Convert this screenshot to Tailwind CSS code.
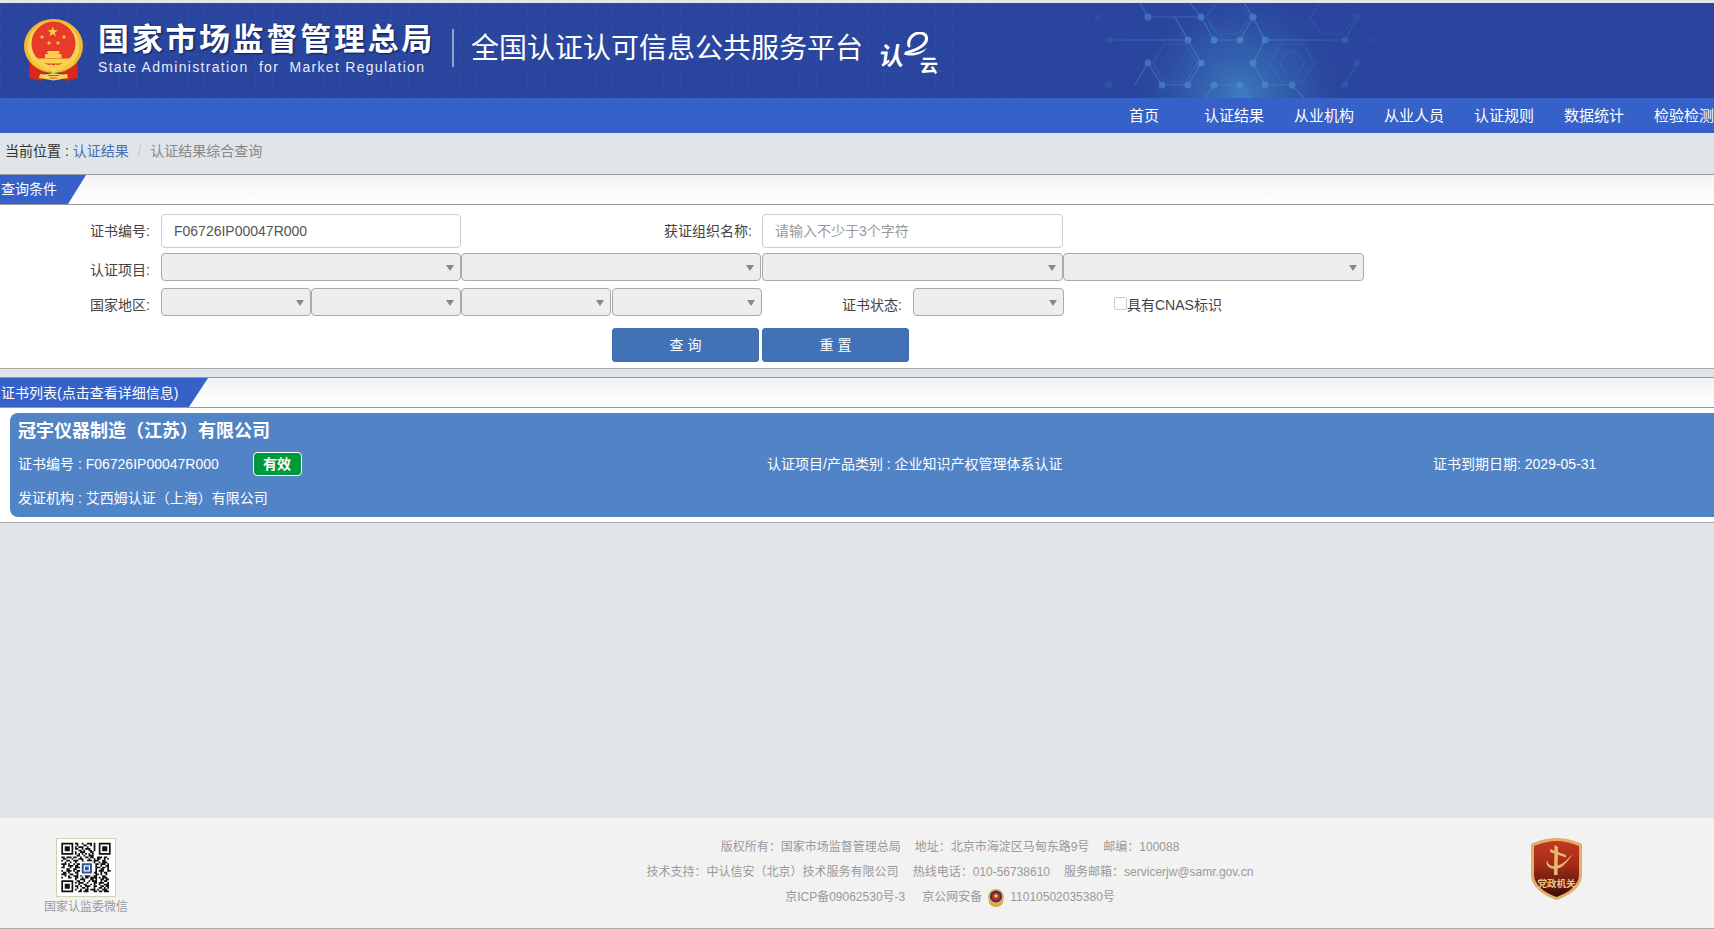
<!DOCTYPE html>
<html lang="zh-CN">
<head>
<meta charset="utf-8">
<title>全国认证认可信息公共服务平台</title>
<script src="https://cdn.jsdelivr.net/npm/@tailwindcss/browser@4"></script>
</head>
<body class="font-['Liberation_Sans','Noto_Sans_CJK_SC',sans-serif] text-[14px] text-[#555] bg-[#e0e5e9]">
<div class="w-[1714px] h-[929px] overflow-hidden flex flex-col">

  <!-- header -->
  <div class="h-[3px] bg-[#e4e6ea]"></div>
  <header class="relative h-[95px] bg-[#2a459d] overflow-hidden flex items-start">
    <svg class="absolute inset-0" width="1714" height="95" viewBox="0 0 1714 95">
      <defs>
        <pattern id="grid" width="17" height="17" patternUnits="userSpaceOnUse">
          <path d="M17 0H0V17" fill="none" stroke="#3a55ad" stroke-width="1"/>
        </pattern>
        <linearGradient id="gridFade" x1="0" x2="1" y1="0" y2="0">
          <stop offset="0" stop-color="#fff" stop-opacity=".55"/>
          <stop offset=".8" stop-color="#fff" stop-opacity=".55"/>
          <stop offset="1" stop-color="#fff" stop-opacity="0"/>
        </linearGradient>
        <mask id="gridMask"><rect width="1240" height="95" fill="url(#gridFade)"/></mask>
        <radialGradient id="glow" cx="1240" cy="92" r="110" gradientUnits="userSpaceOnUse">
          <stop offset="0" stop-color="#3f86c4" stop-opacity=".85"/>
          <stop offset=".6" stop-color="#3568b4" stop-opacity=".4"/>
          <stop offset="1" stop-color="#2a459d" stop-opacity="0"/>
        </radialGradient>
        <radialGradient id="netFade" cx="1225" cy="60" r="165" gradientUnits="userSpaceOnUse">
          <stop offset="0" stop-color="#fff"/>
          <stop offset=".55" stop-color="#fff" stop-opacity=".7"/>
          <stop offset="1" stop-color="#fff" stop-opacity=".08"/>
        </radialGradient>
        <mask id="netMask"><rect width="1714" height="95" fill="url(#netFade)"/></mask>
      </defs>
      <rect width="1240" height="95" fill="url(#grid)" mask="url(#gridMask)"/>
      <rect x="1060" width="360" height="95" fill="url(#glow)"/>
      <g mask="url(#netMask)">
        <g transform="translate(0 -3)" fill="none" stroke="#4b86c4" stroke-width="1.2" opacity=".75">
          <path d="M1140 3l8 14h53l13 23h26l13-23-9-14M1201 17l-11-14M1109 40h79l13 23-13 22h-26l-14-22 -13 22M1188 40l-13-23M1345 40h-80l-12 23 12 22h27l12 13M1214 85h26l10 13M1214 85l-9 13M1265 40l-12-23M1345 40l12-23M1345 85l12-22"/>
          <path opacity=".5" d="M1164 44h22l11 19-11 19h-22l-11-19zM1217 3h22l11 14-11 17h-22l-11-17zM1281 44h22l11 19-11 19h-22l-11-19zM1321 3h22l11 14-11 17h-22l-11-17zM1286 52h12l6 11-6 11h-12l-6-11z"/>
        </g>
        <g transform="translate(0 -3)" fill="#4e8cc8" opacity=".8">
          <circle cx="1148" cy="17" r="3.5"/><circle cx="1201" cy="17" r="3.5"/><circle cx="1253" cy="17" r="3.5"/>
          <circle cx="1109" cy="40" r="3.5" opacity=".5"/><circle cx="1188" cy="40" r="3.5"/><circle cx="1214" cy="40" r="3.5"/><circle cx="1240" cy="40" r="3.5"/><circle cx="1265" cy="40" r="3.5"/><circle cx="1345" cy="40" r="3.5"/><circle cx="1370" cy="40" r="3.5" opacity=".4"/>
          <circle cx="1148" cy="63" r="3.5"/><circle cx="1201" cy="63" r="3.5"/><circle cx="1253" cy="63" r="3.5"/><circle cx="1357" cy="63" r="3.5" opacity=".6"/><circle cx="1357" cy="17" r="3.5" opacity=".6"/><circle cx="1097" cy="17" r="3.5" opacity=".4"/>
          <circle cx="1109" cy="85" r="3.5" opacity=".5"/><circle cx="1162" cy="85" r="3.5"/><circle cx="1188" cy="85" r="3.5"/><circle cx="1214" cy="85" r="3.5"/><circle cx="1240" cy="85" r="3.5"/><circle cx="1265" cy="85" r="3.5"/><circle cx="1292" cy="85" r="3.5"/><circle cx="1345" cy="85" r="3.5" opacity=".6"/>
        </g>
      </g>
    </svg>

    <!-- national emblem -->
    <svg class="relative ml-[24px] mt-[16px] shrink-0" width="59" height="63" viewBox="0 0 59 63">
      <path d="M6 42l-1 17 13 3 5-10zM53 42l1 17-13 3-5-10z" fill="#d8281e"/>
      <ellipse cx="29.5" cy="27" rx="29.5" ry="27" fill="#eeb930"/>
      <ellipse cx="29.5" cy="27" rx="26" ry="24.5" fill="#f6d45a"/>
      <circle cx="29.5" cy="24.5" r="22" fill="#e83a2a"/>
      <g fill="#f8d24c">
        <polygon transform="translate(28.7 13) scale(5.5)" points="0,-1 .225,-.31 .95,-.31 .36,.12 .59,.81 0,.38 -.59,.81 -.36,.12 -.95,-.31 -.225,-.31"/>
        <polygon transform="translate(18 18) scale(2.6)" points="0,-1 .225,-.31 .95,-.31 .36,.12 .59,.81 0,.38 -.59,.81 -.36,.12 -.95,-.31 -.225,-.31"/>
        <polygon transform="translate(40 18) scale(2.6)" points="0,-1 .225,-.31 .95,-.31 .36,.12 .59,.81 0,.38 -.59,.81 -.36,.12 -.95,-.31 -.225,-.31"/>
        <polygon transform="translate(25 24) scale(2.6)" points="0,-1 .225,-.31 .95,-.31 .36,.12 .59,.81 0,.38 -.59,.81 -.36,.12 -.95,-.31 -.225,-.31"/>
        <polygon transform="translate(34 24) scale(2.6)" points="0,-1 .225,-.31 .95,-.31 .36,.12 .59,.81 0,.38 -.59,.81 -.36,.12 -.95,-.31 -.225,-.31"/>
        <path d="M24 32h11l1 2h-1.500v1h3v4H21v-4h3v-1h-1.500z"/>
        <path d="M11 39.500h37l-2 5H13z"/>
      </g>
      <path d="M9 43c6 5 14 7 20.500 7S44 48 50 43" fill="none" stroke="#f4c93f" stroke-width="3"/>
      <path d="M20 46l4 2 3-3 2.500 2 2.500-2 3 3 4-2 1 4-5 1-5 3-5-3-5-1z" fill="#f8d24c"/>
      <path d="M16 55c5 1 8 0 13.500-1 5.500 1 8.500 2 13.500 1l1 4-6 1-8.500 1.500L21 60l-6-1z" fill="#f6d45a"/>
      <path d="M24 56.500h11M26 59h7" stroke="#d8281e" stroke-width=".8"/>
    </svg>

    <div class="relative ml-[15px] mt-[18px] shrink-0">
      <div class="text-[31px] leading-[37px] font-bold tracking-[2.7px] text-white whitespace-nowrap [text-shadow:1px_1px_2px_#0b1a55]">国家市场监督管理总局</div>
      <div class="text-[14px] leading-[16px] mt-[1px] tracking-[1.3px] text-[#e8edf8] whitespace-pre">State Administration  for  Market Regulation</div>
    </div>
    <div class="relative w-[2px] h-[38px] mt-[26px] ml-[17px] bg-[#8fa2d0] shrink-0"></div>
    <div class="relative ml-[17px] mt-[27px] text-[28px] leading-[38px] text-white whitespace-nowrap">全国认证认可信息公共服务平台</div>

    <!-- 认云 logo -->
    <svg class="relative ml-[16px] mt-[29px] shrink-0" width="64" height="48" viewBox="0 0 64 48">
      <text x="0" y="33" font-size="25" font-weight="700" fill="#fff" font-family="Noto Sans CJK SC, sans-serif" transform="skewX(-8) translate(4 0)">认</text>
      <path d="M30 14C28 6 36 0 42 1c7 1 7 8 2 12-4 4-10 6-17 8" fill="none" stroke="#fff" stroke-width="3" stroke-linecap="round"/>
      <path d="M24 22c8 3 18 2 24-6-5 4-14 5-24 6z" fill="#fff"/>
      <text x="41" y="40" font-size="18" font-weight="700" fill="#fff" font-family="Noto Sans CJK SC, sans-serif">云</text>
    </svg>
  </header>

  <nav class="h-[35px] bg-[#3561c9] overflow-hidden shrink-0">
    <ul class="flex ml-[1099px] w-[700px] text-[15px] leading-[35px] text-white">
      <li class="w-[90px] text-center shrink-0">首页</li>
      <li class="w-[90px] text-center shrink-0">认证结果</li>
      <li class="w-[90px] text-center shrink-0">从业机构</li>
      <li class="w-[90px] text-center shrink-0">从业人员</li>
      <li class="w-[90px] text-center shrink-0">认证规则</li>
      <li class="w-[90px] text-center shrink-0">数据统计</li>
      <li class="w-[90px] text-center shrink-0">检验检测</li>
    </ul>
  </nav>

  <main class="flex-1 min-h-0">
    <!-- breadcrumb -->
    <div class="h-[41px] pl-[5px] pb-[4px] flex items-center whitespace-pre">
      <span class="text-[#333]">当前位置 : </span>
      <span class="text-[#4a6fb5]">认证结果</span>
      <span class="text-[#ccc] mx-[5px]"> / </span>
      <span class="text-[#888]">认证结果综合查询</span>
    </div>

    <!-- query -->
    <section class="bg-white border-b border-[#aaa]">
      <div class="h-[31px] border-y border-[#999] bg-gradient-to-b from-[#f3f3f3] to-white">
        <div class="w-[86px] h-full pl-[1px] bg-[#3561c9] text-white leading-[29px] [clip-path:polygon(0_0,100%_0,calc(100%-18px)_100%,0_100%)]">查询条件</div>
      </div>
      <div class="pt-[9px] pb-[6px] text-[#444]">
        <div class="flex items-center h-[34px]">
          <label class="w-[150px] mr-[11px] text-right">证书编号:</label>
          <input type="text" value="F06726IP00047R000" class="w-[300px] h-[34px] px-[12px] bg-white border border-[#ccc] rounded-[4px] text-[#555] outline-none">
          <label class="w-[291px] mr-[10px] text-right">获证组织名称:</label>
          <input type="text" placeholder="请输入不少于3个字符" class="w-[301px] h-[34px] px-[12px] bg-white border border-[#ccc] rounded-[4px] text-[#555] placeholder:text-[#999] outline-none">
        </div>
        <div class="flex items-start h-[28px] mt-[5px]">
          <label class="w-[150px] mr-[11px] mt-[3px] leading-[28px] text-right">认证项目:</label>
          <div class="relative w-[300px] h-[28px] bg-[#eee] border border-[#aaa] rounded-[4px]"><span class="absolute right-[6px] top-[11px] border-x-[4px] border-x-transparent border-t-[6px] border-t-[#888]"></span></div>
          <div class="relative w-[300px] h-[28px] mr-[1px] bg-[#eee] border border-[#aaa] rounded-[4px]"><span class="absolute right-[6px] top-[11px] border-x-[4px] border-x-transparent border-t-[6px] border-t-[#888]"></span></div>
          <div class="relative w-[301px] h-[28px] bg-[#eee] border border-[#aaa] rounded-[4px]"><span class="absolute right-[6px] top-[11px] border-x-[4px] border-x-transparent border-t-[6px] border-t-[#888]"></span></div>
          <div class="relative w-[301px] h-[28px] bg-[#eee] border border-[#aaa] rounded-[4px]"><span class="absolute right-[6px] top-[11px] border-x-[4px] border-x-transparent border-t-[6px] border-t-[#888]"></span></div>
        </div>
        <div class="flex items-start h-[28px] mt-[7px]">
          <label class="w-[150px] mr-[11px] mt-[3px] leading-[28px] text-right">国家地区:</label>
          <div class="relative w-[150px] h-[28px] bg-[#eee] border border-[#aaa] rounded-[4px]"><span class="absolute right-[6px] top-[11px] border-x-[4px] border-x-transparent border-t-[6px] border-t-[#888]"></span></div>
          <div class="relative w-[150px] h-[28px] bg-[#eee] border border-[#aaa] rounded-[4px]"><span class="absolute right-[6px] top-[11px] border-x-[4px] border-x-transparent border-t-[6px] border-t-[#888]"></span></div>
          <div class="relative w-[150px] h-[28px] mr-[1px] bg-[#eee] border border-[#aaa] rounded-[4px]"><span class="absolute right-[6px] top-[11px] border-x-[4px] border-x-transparent border-t-[6px] border-t-[#888]"></span></div>
          <div class="relative w-[150px] h-[28px] bg-[#eee] border border-[#aaa] rounded-[4px]"><span class="absolute right-[6px] top-[11px] border-x-[4px] border-x-transparent border-t-[6px] border-t-[#888]"></span></div>
          <label class="w-[140px] mr-[11px] mt-[3px] leading-[28px] text-right">证书状态:</label>
          <div class="relative w-[151px] h-[28px] bg-[#eee] border border-[#aaa] rounded-[4px]"><span class="absolute right-[6px] top-[11px] border-x-[4px] border-x-transparent border-t-[6px] border-t-[#888]"></span></div>
          <label class="flex items-center ml-[50px] mt-[3px] leading-[28px]">
            <span class="w-[13px] h-[13px] mt-[-4px] bg-white border border-[#ccc] rounded-[2px]"></span>具有CNAS标识
          </label>
        </div>
        <div class="flex h-[34px] mt-[12px] ml-[612px] gap-[3px]">
          <button type="button" class="w-[147px] h-[34px] bg-[#4272b6] border border-[#3f6cab] rounded-[3px] text-white whitespace-pre">查 询</button>
          <button type="button" class="w-[147px] h-[34px] bg-[#4272b6] border border-[#3f6cab] rounded-[3px] text-white whitespace-pre">重 置</button>
        </div>
      </div>
    </section>

    <!-- result list -->
    <section class="mt-[8px] bg-white border-b border-[#aaa]">
      <div class="h-[31px] border-y border-[#999] bg-gradient-to-b from-[#f3f3f3] to-white">
        <div class="w-[208px] h-full pl-[1px] bg-[#3561c9] text-white leading-[30px] whitespace-nowrap [clip-path:polygon(0_0,100%_0,calc(100%-19px)_100%,0_100%)]">证书列表(点击查看详细信息)</div>
      </div>
      <div class="pt-[5px] pb-[5px] pl-[10px]">
        <div class="h-[104px] pl-[8px] bg-[#5183c7] rounded-l-[8px] text-white">
          <h3 class="pt-[6px] text-[18px] leading-[24px] font-bold">冠宇仪器制造（江苏）有限公司</h3>
          <div class="flex items-center h-[24px] mt-[9px]">
            <div class="w-[234.500px] whitespace-nowrap">证书编号 : F06726IP00047R000</div>
            <span class="w-[49px] h-[24px] leading-[22px] text-center font-bold bg-[#009a3a] border border-white rounded-[4px]">有效</span>
            <div class="w-[465.500px]"></div>
            <div class="w-[666px] whitespace-nowrap">认证项目/产品类别 : 企业知识产权管理体系认证</div>
            <div class="whitespace-nowrap">证书到期日期: 2029-05-31</div>
          </div>
          <div class="mt-[11px] leading-[22px]">发证机构 : 艾西姆认证（上海）有限公司</div>
        </div>
      </div>
    </section>
  </main>

  <!-- footer -->
  <footer class="h-[111px] shrink-0 bg-[#f2f2f2] border-b border-[#aaa] flex text-[12px] text-[#999]">
    <div class="w-[172px] shrink-0 pt-[20px] flex flex-col items-center">
      <svg class="bg-white border border-[#cfd2b4]" width="60" height="59" viewBox="-2.250 -2.250 33.500 33.500">
        <path stroke="#111" fill="none" stroke-width="1" d="M8 .5h2m2 0h1m2 0h3m1 0h1M9 1.500h1m3 0h2m2 0h1m1 0h1M8 2.500h1m1 0h3m2 0h1m3 0h1M8 3.500h2m2 0h1m1 0h3m2 0h1M10 4.500h2m1 0h1m2 0h2m1 0h1M8 5.500h1m2 0h3m3 0h2M8 6.500h1m1 0h1m1 0h1m1 0h1m1 0h1m1 0h1M9 7.500h2m2 0h1m2 0h3M0 8.500h2m1 0h3m1 0h2m2 0h1m2 0h2m1 0h2m2 0h3m1 0h2M1 9.500h2m3 0h1m3 0h3m3 0h1m2 0h1m1 0h2m2 0h1m1 0h1M0 10.500h1m2 0h2m2 0h3m2 0h1m2 0h3m1 0h3m2 0h2M2 11.500h1m2 0h1m2 0h1m3 0h2m4 0h2m2 0h1m1 0h3M0 12.500h3m1 0h1m2 0h1m1 0h2m9 0h2m1 0h3m1 0h1M1 13.500h1m2 0h3m1 0h2m2 0h1m7 0h1m2 0h1m2 0h2M0 14.500h2m3 0h1m2 0h3m1 0h1m7 0h3m1 0h2m1 0h1M3 15.500h2m2 0h2m2 0h2m7 0h1m2 0h2m2 0h1M0 16.500h1m2 0h3m1 0h1m1 0h3m8 0h1m1 0h3m2 0h2M1 17.500h2m1 0h1m3 0h2m3 0h2m2 0h1m1 0h2m2 0h1m1 0h2M0 18.500h3m2 0h2m2 0h1m2 0h3m2 0h2m1 0h2m1 0h1m2 0h1M2 19.500h1m1 0h1m2 0h3m1 0h1m2 0h3m2 0h2m3 0h2M0 20.500h1m3 0h2m2 0h2m2 0h1m1 0h2m1 0h4m1 0h1m1 0h3M8 21.500h1m2 0h3m3 0h2m1 0h1m2 0h2m1 0h2M9 22.500h2m2 0h1m2 0h1m1 0h3m2 0h1m1 0h2M8 23.500h1m1 0h3m2 0h1m3 0h2m1 0h3m2 0h1M10 24.500h1m2 0h2m2 0h1m1 0h1m2 0h1m2 0h3M8 25.500h2m1 0h1m2 0h3m2 0h2m2 0h2m1 0h2M9 26.500h1m2 0h2m1 0h1m3 0h1m2 0h2m1 0h1m1 0h1M8 27.500h1m2 0h1m2 0h2m1 0h3m1 0h1m2 0h3M10 28.500h2m1 0h3m3 0h2m1 0h2m1 0h3"/>
        <path fill="none" stroke="#111" d="M.5.500h6v6h-6zM22.500.500h6v6h-6zM.5 22.500h6v6h-6z"/>
        <path fill="#111" d="M2 2h3v3H2zM24 2h3v3h-3zM2 24h3v3H2z"/>
        <rect x="11" y="11" width="8" height="8" fill="#fff"/>
        <rect x="12" y="12" width="6" height="6" rx=".5" fill="#2f5597"/>
        <path d="M13.500 13.500h3v3h-3z" fill="none" stroke="#fff" stroke-width=".7"/>
      </svg>
      <div class="mt-[1px] leading-[18px] whitespace-nowrap">国家认监委微信</div>
    </div>
    <div class="w-[1100px] ml-[228px] shrink-0 pt-[17px] leading-[25px] text-center">
      <div class="flex justify-center gap-[14px]"><span>版权所有：国家市场监督管理总局</span><span>地址：北京市海淀区马甸东路9号</span><span>邮编：100088</span></div>
      <div class="flex justify-center gap-[14px]"><span>技术支持：中认信安（北京）技术服务有限公司</span><span>热线电话：010-56738610</span><span>服务邮箱：servicerjw@samr.gov.cn</span></div>
      <div class="flex justify-center items-center gap-[17px]">
        <span>京ICP备09062530号-3</span>
        <span class="flex items-center gap-[5px]">京公网安备
          <svg width="18" height="20" viewBox="0 0 18 20">
            <path d="M2 12c-1 4 3 7 7 7s8-3 7-7z" fill="#d9a441"/>
            <circle cx="9" cy="9" r="8" fill="#e3b24a"/>
            <circle cx="9" cy="8.500" r="6" fill="#23356f"/>
            <circle cx="9" cy="8.500" r="4.300" fill="#c8281e"/>
            <circle cx="9" cy="8" r="1.800" fill="#f1cc5b"/>
          </svg>
          11010502035380号</span>
      </div>
    </div>
    <div class="w-[112px] shrink-0 pt-[20px] flex justify-center">
      <svg width="51" height="62" viewBox="0 0 51 62">
        <defs>
          <linearGradient id="shield" x1="0" x2="0" y1="0" y2="1">
            <stop offset="0" stop-color="#c23a1e"/>
            <stop offset=".45" stop-color="#a02a16"/>
            <stop offset="1" stop-color="#3c0c08"/>
          </linearGradient>
        </defs>
        <path d="M25.500 0C33 0 43 2 51 6v31c0 12-13 21-25.500 25C13 58 0 49 0 37V6C8 2 18 0 25.500 0z" fill="#e0b06a"/>
        <path d="M25.500 3C33 3 41 5 48 8v29c0 10-11 18-22.500 22C14 55 3 47 3 37V8C10 5 18 3 25.500 3z" fill="url(#shield)"/>
        <path d="M23.500 7L27 9l-.5 28H23z" fill="#e6b872"/>
        <path d="M19 11l16 6v2.500L19 14z" fill="#e6b872"/>
        <path d="M16 22c-3 9 10 12 17 5 4-4 7-8 9-12-4 5-10 12-17 13-5 1-8-1-9-6z" fill="#e6b872"/>
        <text x="25.500" y="49" font-size="9.500" font-weight="700" text-anchor="middle" fill="#ecc88a" font-family="Noto Sans CJK SC, sans-serif">党政机关</text>
      </svg>
    </div>
  </footer>
</div>
</body>
</html>
